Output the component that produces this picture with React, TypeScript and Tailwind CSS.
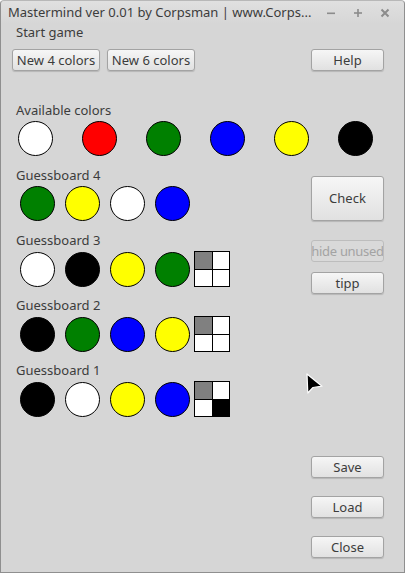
import type { ReactNode } from "react";

const available = ["#ffffff", "#ff0000", "#008000", "#0000ff", "#ffff00", "#000000"];

const boards = [
  { name: "Guessboard 4", pegs: ["#008000", "#ffff00", "#ffffff", "#0000ff"], score: null },
  { name: "Guessboard 3", pegs: ["#ffffff", "#000000", "#ffff00", "#008000"], score: ["#808080", "#ffffff", "#ffffff", "#ffffff"] },
  { name: "Guessboard 2", pegs: ["#000000", "#008000", "#0000ff", "#ffff00"], score: ["#808080", "#ffffff", "#ffffff", "#ffffff"] },
  { name: "Guessboard 1", pegs: ["#000000", "#ffffff", "#ffff00", "#0000ff"], score: ["#808080", "#ffffff", "#ffffff", "#000000"] },
];

function Peg({ color }: { color: string }) {
  return (
    <div
      className="w-[35px] h-[35px] rounded-full border border-black shrink-0"
      style={{ backgroundColor: color }}
    />
  );
}

function Score({ cells }: { cells: string[] }) {
  return (
    <div className="w-[36px] h-[36px] grid grid-cols-2 gap-px bg-black border border-black shrink-0">
      {cells.map((c, i) => (
        <div key={i} style={{ backgroundColor: c }} />
      ))}
    </div>
  );
}

function Btn({ children, className = "", disabled = false }: { children: ReactNode; className?: string; disabled?: boolean }) {
  return (
    <button
      className={
        "h-[22px] rounded-[3px] border text-[13px] leading-none flex items-center justify-center whitespace-nowrap overflow-hidden " +
        (disabled
          ? "border-[#bdbdbd] bg-[#d9d9d9] text-[#a3a3a3]"
          : "border-[#a3a3a3] bg-gradient-to-b from-[#f6f6f6] to-[#e1e1e1] text-[#3c3c3c] shadow-[0_1px_1px_rgba(0,0,0,0.15)]") +
        " " +
        className
      }
    >
      {children}
    </button>
  );
}

export default function App() {
  return (
    <div className="w-[405px] h-[573px] bg-white font-['Noto_Sans',sans-serif] text-[#3c3c3c] relative overflow-hidden">
      <div className="h-full rounded-t-[4px] border border-[#8f8f8f] border-t-[#b8b8b8] bg-[#d6d6d6] flex flex-col">
        {/* Title bar */}
        <div className="h-[23px] flex items-center pl-[7px] pr-[14px] bg-gradient-to-b from-[#e0e0e0] to-[#d6d6d6] rounded-t-[4px]">
          <span className="text-[13px] whitespace-nowrap">Mastermind ver 0.01 by Corpsman | www.Corps...</span>
          <div className="ml-auto flex items-center gap-[17px] text-[#8c8c8c]">
            <svg width="10" height="10" viewBox="0 0 10 10"><rect x="1" y="4.5" width="8" height="1.6" fill="currentColor" /></svg>
            <svg width="10" height="10" viewBox="0 0 10 10"><rect x="1" y="4.2" width="8" height="1.6" fill="currentColor" /><rect x="4.2" y="1" width="1.6" height="8" fill="currentColor" /></svg>
            <svg width="10" height="10" viewBox="0 0 10 10"><path d="M1.5 1.5 L8.5 8.5 M8.5 1.5 L1.5 8.5" stroke="currentColor" strokeWidth="2" /></svg>
          </div>
        </div>

        {/* Menu */}
        <div className="h-[16px] pl-[15px] text-[13px] leading-[16px]">Start game</div>

        {/* Top buttons */}
        <div className="flex mt-[9px] pl-[11px] pr-[20px]">
          <Btn className="w-[88px]">New 4 colors</Btn>
          <Btn className="w-[88px] ml-[7px]">New 6 colors</Btn>
          <Btn className="w-[73px] ml-auto">Help</Btn>
        </div>

        {/* Available colors */}
        <div className="mt-[31px] pl-[15px] text-[13px] leading-[16px]">Available colors</div>
        <div className="flex gap-[29px] pl-[17px] mt-[3px]">
          {available.map((c, i) => (
            <Peg key={i} color={c} />
          ))}
        </div>

        {/* Boards + side buttons */}
        <div className="flex mt-[11px] pr-[20px]">
          <div className="flex flex-col flex-1">
            {boards.map((b) => (
              <div key={b.name} className="h-[65px]">
                <div className="pl-[15px] text-[13px] leading-[16px]">{b.name}</div>
                <div className="flex items-center pl-[19px] mt-[3px]">
                  <div className="flex gap-[10px]">
                    {b.pegs.map((c, i) => (
                      <Peg key={i} color={c} />
                    ))}
                  </div>
                  {b.score && (
                    <div className="ml-[4px]">
                      <Score cells={b.score} />
                    </div>
                  )}
                </div>
              </div>
            ))}
          </div>
          <div className="w-[73px] flex flex-col">
            <Btn className="mt-[9px] !h-[45px] w-full">Check</Btn>
            <Btn disabled className="mt-[19px] w-full tracking-[-0.3px]">hide unused</Btn>
            <Btn className="mt-[10px] w-full">tipp</Btn>
            <Btn className="mt-[162px] w-full">Save</Btn>
            <Btn className="mt-[18px] w-full">Load</Btn>
            <Btn className="mt-[18px] w-full">Close</Btn>
          </div>
        </div>
      </div>

      {/* Mouse pointer */}
      <svg className="absolute left-[305px] top-[372px]" width="20" height="24" viewBox="0 0 20 24">
        <path d="M2 2 L2.8 21 L8 15.5 L17 14.2 Z" fill="#000" stroke="#fff" strokeWidth="1.2" strokeLinejoin="round" />
      </svg>
    </div>
  );
}
